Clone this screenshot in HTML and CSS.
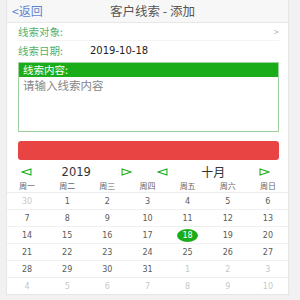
FILE: index.html
```html
<!DOCTYPE html>
<html>
<head>
<meta charset="utf-8">
<link rel="stylesheet" href="styles.css">
</head>
<body>
<div class="page">
  <div class="header">
    <span class="back">&lt;返回</span>
    <span class="title">客户线索 - 添加</span>
  </div>
  <div class="row">
    <span class="label">线索对象:</span>
    <span class="arrow">&gt;</span>
  </div>
  <div class="row">
    <span class="label">线索日期:</span>
    <span class="value">2019-10-18</span>
  </div>
  <div class="box">
    <div class="box-head">线索内容:</div>
    <div class="box-body">请输入线索内容</div>
  </div>
  <div class="btn"></div>
  <div class="cal">
    <div class="nav">
      <div class="nav-group">
        <svg class="tri" viewBox="0 0 12 9"><polygon points="11,1 11,8 1,4.5" fill="none" stroke="#1aad19" stroke-width="1.2"/></svg>
        <span class="nav-text year">2019</span>
        <svg class="tri" viewBox="0 0 12 9"><polygon points="1,1 1,8 11,4.5" fill="none" stroke="#1aad19" stroke-width="1.2"/></svg>
      </div>
      <div class="nav-group">
        <svg class="tri" viewBox="0 0 12 9"><polygon points="11,1 11,8 1,4.5" fill="none" stroke="#1aad19" stroke-width="1.2"/></svg>
        <span class="nav-text">十月</span>
        <svg class="tri" viewBox="0 0 12 9"><polygon points="1,1 1,8 11,4.5" fill="none" stroke="#1aad19" stroke-width="1.2"/></svg>
      </div>
    </div>
    <div class="week">
      <span>周一</span><span>周二</span><span>周三</span><span>周四</span><span>周五</span><span>周六</span><span>周日</span>
    </div>
    <div class="days">
      <span class="other">30</span><span>1</span><span>2</span><span>3</span><span>4</span><span>5</span><span>6</span>
      <span>7</span><span>8</span><span>9</span><span>10</span><span>11</span><span>12</span><span>13</span>
      <span>14</span><span>15</span><span>16</span><span>17</span><span><b class="sel">18</b></span><span>19</span><span>20</span>
      <span>21</span><span>22</span><span>23</span><span>24</span><span>25</span><span>26</span><span>27</span>
      <span>28</span><span>29</span><span>30</span><span>31</span><span class="other">1</span><span class="other">2</span><span class="other">3</span>
      <span class="other">4</span><span class="other">5</span><span class="other">6</span><span class="other">7</span><span class="other">8</span><span class="other">9</span><span class="other">10</span>
    </div>
  </div>
</div>
</body>
</html>
```
FILE: styles.css
```css
* { box-sizing: border-box; margin: 0; padding: 0; }
html, body { width: 300px; height: 300px; overflow: hidden; }
body {
  background: #f1f1f1;
  font-family: "Noto Sans CJK SC", "DejaVu Sans", sans-serif;
  color: #333;
}
.page {
  margin-left: 6px;
  width: 283px;
  height: 295px;
  background: #fff;
  border-left: 1px solid #e6e6e6;
  border-right: 1px solid #e6e6e6;
  border-bottom: 1px solid #e6e6e6;
}
.header {
  height: 23px;
  background: #f7f7f7;
  border-bottom: 1px solid #e8e8e8;
  display: flex;
  align-items: center;
  position: relative;
  padding-left: 5px;
}
.back { font-size: 12px; color: #5a86d0; line-height: 22px; }
.title {
  position: absolute;
  left: 0; right: 0;
  text-align: center;
  font-size: 12.5px;
  color: #555;
  line-height: 22px;
  padding-left: 10px;
}
.row {
  height: 18px;
  margin: 0 9px 0 11px;
  display: flex;
  align-items: center;
  border-bottom: 1px solid #f3f3f3;
  font-size: 10.5px;
}
.row + .row { border-bottom: none; }
.label { color: #55b06c; width: 72px; }
.arrow { margin-left: auto; color: #aaa; font-size: 9px; }
.value { font-family: "DejaVu Sans", sans-serif; font-size: 10px; color: #222; }
.box {
  margin: 3px 9px 0 11px;
  border: 1px solid #9fd09f;
  height: 70px;
}
.box-head {
  background: #1aad19;
  color: #fff;
  font-size: 10.5px;
  height: 14px;
  line-height: 14px;
  padding-left: 4px;
}
.box-body {
  font-size: 11.5px;
  color: #888;
  padding: 1px 4px;
  line-height: 15px;
}
.btn {
  margin: 9px 9px 0 11px;
  height: 19px;
  background: #e84444;
  border-radius: 3px;
}
.cal { margin-top: 3px; }
.nav {
  height: 17px;
  display: grid;
  grid-template-columns: 1fr 1fr;
}
.nav-group {
  display: flex;
  align-items: center;
  justify-content: space-between;
  padding: 0 16px 0 14px;
}
.nav-group + .nav-group { padding: 0 18px 0 9px; }
.tri { width: 11px; height: 8px; }
.nav-text { font-size: 12px; color: #333; }
.year { font-family: "DejaVu Sans", sans-serif; font-size: 11.5px; }
.week {
  display: grid;
  grid-template-columns: repeat(7, 1fr);
  height: 13px;
  border-bottom: 1px solid #ececec;
  font-size: 8px;
  color: #666;
  text-align: center;
  line-height: 11px;
}
.days {
  display: grid;
  grid-template-columns: repeat(7, 1fr);
  grid-auto-rows: 17px;
  font-family: "DejaVu Sans", sans-serif;
  font-size: 8px;
  color: #5a5a5a;
}
.days span {
  display: flex;
  align-items: center;
  justify-content: center;
  border-bottom: 1px solid #f0f0f0;
}
.days span:nth-last-child(-n+7) { border-bottom: none; }
.days .other { color: #c8c8c8; }
.sel {
  font-weight: normal;
  background: #1aad19;
  color: #fff;
  width: 21px;
  height: 13px;
  border-radius: 50%;
  display: flex;
  align-items: center;
  justify-content: center;
}
```
